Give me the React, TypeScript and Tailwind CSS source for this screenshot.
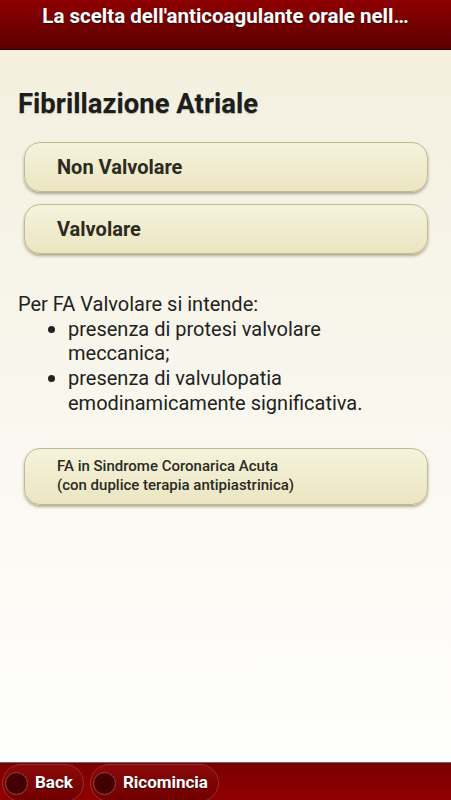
const choices = ['Non Valvolare', 'Valvolare'];

function ChoiceButton({ children, small }: { children: React.ReactNode; small?: boolean }) {
  return (
    <button
      className={
        'w-full text-left rounded-[16px] border border-[#c2b994] bg-gradient-to-b from-[#f6f3dd] to-[#ebe5c1] shadow-[0_2px_3px_rgba(90,80,40,0.45)] text-[#2b2b22] pl-[32px] pr-4 ' +
        (small ? 'h-[57px] text-[15px] leading-[19px] font-medium' : 'h-[50px] text-[20px] font-bold')
      }
    >
      {children}
    </button>
  );
}

function FooterButton({ label }: { label: string }) {
  return (
    <button className="flex items-center h-[38px] mt-[1px] rounded-full border border-[#a02a2a] bg-gradient-to-b from-[#8a0a0a] to-[#700000] pl-[2px] pr-[10px] gap-[7px]">
      <span className="w-[23px] h-[23px] rounded-full bg-[#430000] border border-[#a04040]" />
      <span className="text-white font-bold text-[17px] [text-shadow:0_1px_1px_rgba(0,0,0,0.6)]">{label}</span>
    </button>
  );
}

export default function App() {
  return (
    <div className="w-[451px] h-[800px] flex flex-col font-['Roboto','Liberation_Sans',sans-serif] bg-gradient-to-b from-[#f3efdd] to-[#ffffff] overflow-hidden">
      <header className="h-[50px] shrink-0 bg-gradient-to-b from-[#8e0000] to-[#5c0000] border-b border-[#3a0000] flex items-center justify-center px-3">
        <h1 className="text-white font-bold text-[20.5px] whitespace-nowrap -mt-[16px] [text-shadow:0_1px_1px_rgba(0,0,0,0.6)]">
          La scelta dell'anticoagulante orale nell…
        </h1>
      </header>

      <main className="flex-1 px-[18px] pt-[38px]">
        <h2 className="text-[27.5px] font-bold text-[#1d1d1d] leading-[32px] [text-shadow:0_1px_1px_rgba(0,0,0,0.25)]">
          Fibrillazione Atriale
        </h2>
        <div className="mt-[22px] pl-[6px] pr-[5px] flex flex-col gap-[12px]">
          {choices.map((c) => (
            <ChoiceButton key={c}>{c}</ChoiceButton>
          ))}
        </div>

        <div className="mt-[38px] text-[20px] leading-[24.7px] text-[#222] pr-[14px]">
          <p>Per FA Valvolare si intende:</p>
          <ul className="pl-[50px] list-disc marker:text-[22px]">
            <li>presenza di protesi valvolare meccanica;</li>
            <li>presenza di valvulopatia emodinamicamente significativa.</li>
          </ul>
        </div>

        <div className="mt-[32px] pl-[6px] pr-[5px]">
          <ChoiceButton small>
            FA in Sindrome Coronarica Acuta
            <br />
            (con duplice terapia antipiastrinica)
          </ChoiceButton>
        </div>
      </main>

      <footer className="h-[38px] shrink-0 border-t border-[#6a6a6a] bg-gradient-to-b from-[#7a0000] to-[#900000] flex items-start gap-[6px] px-[2px]">
        <FooterButton label="Back" />
        <FooterButton label="Ricomincia" />
      </footer>
    </div>
  );
}
